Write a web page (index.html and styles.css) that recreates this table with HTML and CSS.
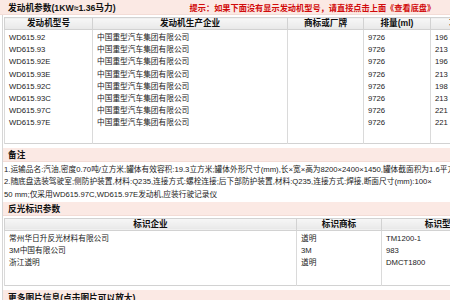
FILE: index.html
```html
<!DOCTYPE html>
<html lang="zh">
<head>
<meta charset="utf-8">
<title>发动机参数</title>
<link rel="stylesheet" href="styles.css">
</head>
<body>
<div class="page">
  <div class="bar bar-top">
    <span class="title">发动机参数(1KW≈1.36马力)</span>
    <span class="hint">提示：如果下面没有显示发动机型号，请直接点击上面《查看底盘》</span>
  </div>
  <table class="grid engines">
    <colgroup>
      <col class="c1"><col class="c2"><col class="c3"><col class="c4"><col class="c5">
    </colgroup>
    <thead>
      <tr><th>发动机型号</th><th>发动机生产企业</th><th>商标或厂牌</th><th>排量(ml)</th><th>功率(kw)</th></tr>
    </thead>
    <tbody>
      <tr class="first"><td>WD615.92</td><td>中国重型汽车集团有限公司</td><td></td><td>9726</td><td>196</td></tr>
      <tr><td>WD615.93</td><td>中国重型汽车集团有限公司</td><td></td><td>9726</td><td>213</td></tr>
      <tr><td>WD615.92E</td><td>中国重型汽车集团有限公司</td><td></td><td>9726</td><td>196</td></tr>
      <tr><td>WD615.93E</td><td>中国重型汽车集团有限公司</td><td></td><td>9726</td><td>213</td></tr>
      <tr><td>WD615.92C</td><td>中国重型汽车集团有限公司</td><td></td><td>9726</td><td>198</td></tr>
      <tr><td>WD615.93C</td><td>中国重型汽车集团有限公司</td><td></td><td>9726</td><td>213</td></tr>
      <tr><td>WD615.97C</td><td>中国重型汽车集团有限公司</td><td></td><td>9726</td><td>221</td></tr>
      <tr><td>WD615.97E</td><td>中国重型汽车集团有限公司</td><td></td><td>9726</td><td>221</td></tr>
      <tr class="filler"><td></td><td></td><td></td><td></td><td></td></tr>
    </tbody>
  </table>

  <div class="bar"><span class="title">备注</span></div>
  <div class="notes">
    <p>1.运输品名:汽油,密度0.70吨/立方米;罐体有效容积:19.3立方米;罐体外形尺寸(mm),长×宽×高为8200×2400×1450,罐体截面积为1.6平方米</p>
    <p>2.随底盘选装驾驶室;侧防护装置,材料:Q235,连接方式:螺栓连接;后下部防护装置,材料:Q235,连接方式:焊接,断面尺寸(mm):100×<br>50 mm;仅采用WD615.97C,WD615.97E发动机,应装行驶记录仪</p>
  </div>

  <div class="bar bar-tight"><span class="title">反光标识参数</span></div>
  <table class="grid marks">
    <colgroup>
      <col class="m1"><col class="m2"><col class="m3">
    </colgroup>
    <thead>
      <tr><th>标识企业</th><th>标识商标</th><th>标识型号</th></tr>
    </thead>
    <tbody>
      <tr class="first"><td>常州华日升反光材料有限公司</td><td>道明</td><td>TM1200-1</td></tr>
      <tr><td>3M中国有限公司</td><td>3M</td><td>983</td></tr>
      <tr><td>浙江道明</td><td>道明</td><td>DMCT1800</td></tr>
      <tr class="filler"><td></td><td></td><td></td></tr>
    </tbody>
  </table>

  <div class="bar bar-last"><span class="title">更多图片信息(点击图片可以放大)</span></div>
</div>
</body>
</html>
```

FILE: styles.css
```css
html, body {
  margin: 0;
  padding: 0;
  background: #ffffff;
  overflow: hidden;
}

body {
  font-family: "Liberation Sans", "Noto Sans CJK SC", sans-serif;
  font-size: 7.7px;
  color: #222222;
}

.page {
  width: 500px;
  margin-left: 2px;
  border-left: 1px solid #d6d6d6;
}

.bar {
  display: flex;
  align-items: center;
  height: 13px;
  background: #fbe9e4;
  border-bottom: 1px solid #f3dcd6;
  padding-left: 5px;
  margin-top: 4px;
}

.bar-top {
  height: 14px;
  margin-top: 0;
  margin-left: -3px;
  padding-left: 8px;
}

.bar-tight {
  margin-top: 0;
}

.bar-last {
  margin-top: 4px;
  height: 14px;
}

.title {
  font-weight: bold;
  font-size: 8.7px;
  color: #111111;
  white-space: nowrap;
}

.hint {
  margin-left: 74px;
  font-weight: bold;
  font-size: 8.2px;
  color: #d10a0a;
  white-space: nowrap;
}

.grid {
  width: 498px;
  border-collapse: collapse;
  table-layout: fixed;
  margin-top: 2px;
  margin-left: 1px;
  border: 1px solid #d2d2d2;
}

.grid th {
  height: 11px;
  line-height: 11px;
  padding: 0;
  font-size: 8.6px;
  font-weight: bold;
  color: #111111;
  text-align: center;
  background: linear-gradient(#f7f7f7, #e8e8e8);
  border: 1px solid #d2d2d2;
  white-space: nowrap;
  overflow: hidden;
}

.grid td {
  padding: 0 4px;
  line-height: 12.2px;
  height: 12.2px;
  border-left: 1px solid #dadada;
  border-right: 1px solid #dadada;
  white-space: nowrap;
  overflow: hidden;
  vertical-align: middle;
}

.grid tr.first td {
  padding-top: 2px;
}

.engines tr.filler td {
  height: 13px;
}

.marks tr.filler td {
  height: 17px;
}

.marks td {
  line-height: 11.9px;
  height: 11.9px;
}

.c1 { width: 88px; }
.c2 { width: 195px; }
.c3 { width: 76px; }
.c4 { width: 67px; }
.c5 { width: 72px; }

.m1 { width: 292px; }
.m2 { width: 85px; }
.m3 { width: 121px; }

.notes {
  padding: 2px 0 0 1px;
  width: 492px;
}

.notes p {
  margin: 0;
  line-height: 12.7px;
  white-space: nowrap;
}
```
